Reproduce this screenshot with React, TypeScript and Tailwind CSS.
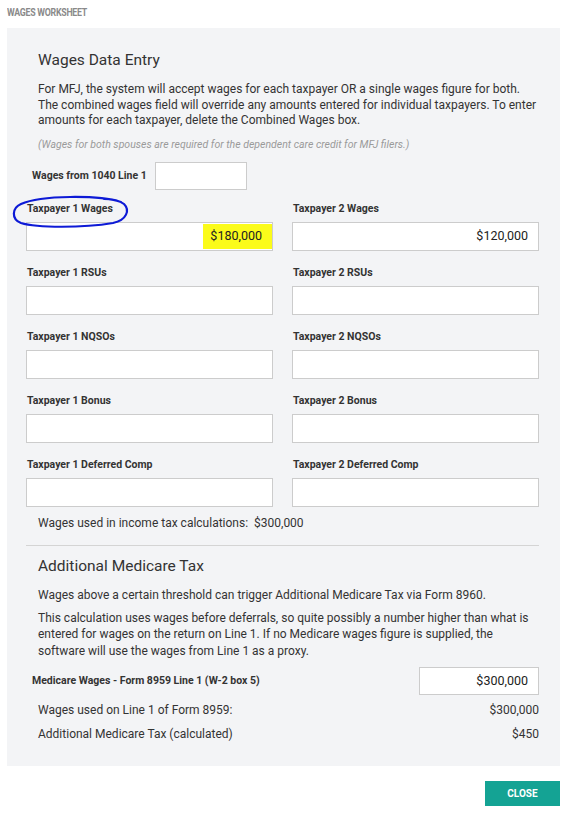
const font = { fontFamily: 'Roboto, "Liberation Sans", sans-serif' };

type FieldProps = {
  label: string;
  value?: string;
  highlight?: boolean;
  circled?: boolean;
};

function Field({ label, value, highlight, circled }: FieldProps) {
  return (
    <div className="relative flex flex-col">
      {circled && (
        <svg
          className="pointer-events-none absolute left-[-15px] top-[-7px]"
          width="120"
          height="34"
          viewBox="0 0 120 34"
          fill="none"
        >
          <path
            d="M110 7 C88 0 30 0 10 9 C1 13 0 24 10 28 C26 33 72 33 102 28 C116 25 119 15 113 9 C108 5 100 4 93 4"
            stroke="#0d1ad6"
            strokeWidth="2.2"
            strokeLinecap="round"
          />
        </svg>
      )}
      <span className="relative h-[14px] pl-px text-[10.5px] font-bold leading-[14px] text-[#333]">
        {label}
      </span>
      <div className="mt-[6px] flex h-[29px] justify-end border border-[#ccc] bg-white text-[12.5px] text-[#222]">
        {value &&
          (highlight ? (
            <span className="my-px flex items-center bg-[#fbfb1a] pl-[7px] pr-[10px]">{value}</span>
          ) : (
            <span className="flex items-center pr-[10px]">{value}</span>
          ))}
      </div>
    </div>
  );
}

const rows: [FieldProps, FieldProps][] = [
  [
    { label: 'Taxpayer 1 Wages', value: '$180,000', highlight: true, circled: true },
    { label: 'Taxpayer 2 Wages', value: '$120,000' },
  ],
  [{ label: 'Taxpayer 1 RSUs' }, { label: 'Taxpayer 2 RSUs' }],
  [{ label: 'Taxpayer 1 NQSOs' }, { label: 'Taxpayer 2 NQSOs' }],
  [{ label: 'Taxpayer 1 Bonus' }, { label: 'Taxpayer 2 Bonus' }],
  [{ label: 'Taxpayer 1 Deferred Comp' }, { label: 'Taxpayer 2 Deferred Comp' }],
];

export default function App() {
  return (
    <div className="w-[567px] bg-white text-[#333]" style={font}>
      <div className="flex h-[28px] items-start pl-[7px] pt-[5px]">
        <span className="origin-left scale-x-[0.88] text-[10px] font-bold uppercase tracking-[-0.3px] text-[#8a8a8a]">
          Wages Worksheet
        </span>
      </div>

      <div className="mx-[7px] bg-[#f3f4f6] pb-[24px] pl-[19px] pr-[21px] pt-[22px]">
        <h2 className="ml-[12px] text-[15.5px] leading-[20px] text-[#333]">Wages Data Entry</h2>
        <p className="ml-[12px] mt-[12px] text-[12px] leading-[15.5px]">
          For MFJ, the system will accept wages for each taxpayer OR a single wages figure for both.
          The combined wages field will override any amounts entered for individual taxpayers. To
          enter amounts for each taxpayer, delete the Combined Wages box.
        </p>
        <p className="ml-[12px] mt-[9px] text-[10.5px] italic leading-[14px] text-[#9a9a9a]">
          (Wages for both spouses are required for the dependent care credit for MFJ filers.)
        </p>

        <div className="ml-[6px] mt-[10px] flex items-center gap-[8px]">
          <span className="text-[10.5px] font-bold text-[#333]">Wages from 1040 Line 1</span>
          <div className="h-[28px] w-[92px] border border-[#ccc] bg-white" />
        </div>

        <div className="mt-[12px] flex flex-col gap-[15px]">
          {rows.map(([a, b]) => (
            <div key={a.label} className="grid grid-cols-2 gap-[19px]">
              <Field {...a} />
              <Field {...b} />
            </div>
          ))}
        </div>

        <p className="ml-[12px] mt-[8px] text-[12px] leading-[16px]">
          Wages used in income tax calculations:&nbsp; $300,000
        </p>

        <hr className="mt-[14px] border-t border-[#d4d4d4]" />

        <h2 className="ml-[12px] mt-[10px] text-[15.5px] leading-[20px]">Additional Medicare Tax</h2>
        <p className="ml-[12px] mt-[11px] text-[12px] leading-[16px]">
          Wages above a certain threshold can trigger Additional Medicare Tax via Form 8960.
        </p>
        <p className="ml-[12px] mt-[7px] text-[12px] leading-[16.5px]">
          This calculation uses wages before deferrals, so quite possibly a number higher than what is
          entered for wages on the return on Line 1. If no Medicare wages figure is supplied, the
          software will use the wages from Line 1 as a proxy.
        </p>

        <div className="ml-[6px] mt-[8px] flex items-center justify-between">
          <span className="text-[10.5px] font-bold text-[#333]">
            Medicare Wages - Form 8959 Line 1 (W-2 box 5)
          </span>
          <div className="flex h-[28px] w-[120px] items-center justify-end border border-[#ccc] bg-white pr-[10px] text-[12.5px] text-[#222]">
            $300,000
          </div>
        </div>

        <div className="ml-[12px] mt-[7px] flex justify-between text-[12px] leading-[16px]">
          <span>Wages used on Line 1 of Form 8959:</span>
          <span>$300,000</span>
        </div>
        <div className="ml-[12px] mt-[8px] flex justify-between text-[12px] leading-[16px]">
          <span>Additional Medicare Tax (calculated)</span>
          <span>$450</span>
        </div>
      </div>

      <div className="mr-[7px] mt-[15px] flex justify-end pb-[7px]">
        <button className="h-[25px] w-[75px] bg-[#14a394] text-[10px] font-bold uppercase text-white">
          Close
        </button>
      </div>
    </div>
  );
}
